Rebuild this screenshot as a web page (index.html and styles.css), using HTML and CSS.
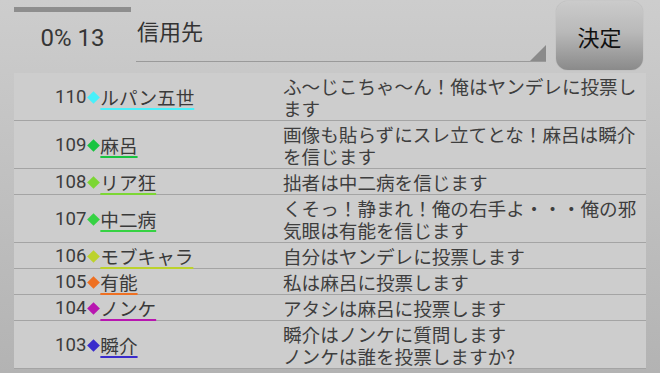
FILE: index.html
```html
<!DOCTYPE html>
<html lang="ja">
<head>
    <meta charset="UTF-8">
    <meta name="viewport" content="width=device-width, initial-scale=1.0">
    <title>投票</title>
    <link rel="stylesheet" href="styles.css">
</head>
<body>

    <!-- Top bar: progress, target spinner and confirm button -->
    <div class="header">
        <div class="status">
            <div class="progress"></div>
            <div class="count">0% 13</div>
        </div>
        <div class="spinner">
            <span class="spinner-text">信用先</span>
            <span class="spinner-arrow"></span>
        </div>
        <button type="button" class="decide">決定</button>
    </div>

    <!-- Message list -->
    <div class="list">
        <div class="row c-cyan">
            <div class="who"><span class="num">110</span><span class="mark"></span><span class="name">ルパン五世</span></div>
            <div class="msg">ふ〜じこちゃ〜ん！俺はヤンデレに投票します</div>
        </div>
        <div class="row c-green">
            <div class="who"><span class="num">109</span><span class="mark"></span><span class="name">麻呂</span></div>
            <div class="msg">画像も貼らずにスレ立てとな！麻呂は瞬介を信じます</div>
        </div>
        <div class="row c-lime">
            <div class="who"><span class="num">108</span><span class="mark"></span><span class="name">リア狂</span></div>
            <div class="msg">拙者は中二病を信じます</div>
        </div>
        <div class="row c-leaf">
            <div class="who"><span class="num">107</span><span class="mark"></span><span class="name">中二病</span></div>
            <div class="msg">くそっ！静まれ！俺の右手よ・・・俺の邪気眼は有能を信じます</div>
        </div>
        <div class="row c-olive">
            <div class="who"><span class="num">106</span><span class="mark"></span><span class="name">モブキャラ</span></div>
            <div class="msg">自分はヤンデレに投票します</div>
        </div>
        <div class="row c-orange">
            <div class="who"><span class="num">105</span><span class="mark"></span><span class="name">有能</span></div>
            <div class="msg">私は麻呂に投票します</div>
        </div>
        <div class="row c-purple">
            <div class="who"><span class="num">104</span><span class="mark"></span><span class="name">ノンケ</span></div>
            <div class="msg">アタシは麻呂に投票します</div>
        </div>
        <div class="row c-blue">
            <div class="who"><span class="num">103</span><span class="mark"></span><span class="name">瞬介</span></div>
            <div class="msg">瞬介はノンケに質問します<br>ノンケは誰を投票しますか?</div>
        </div>
    </div>

</body>
</html>
```

FILE: styles.css
```css
/* Basic page styling */
body {
    margin: 0;
    height: 373px;
    overflow: hidden;
    font-family: Roboto, "Noto Sans CJK JP", sans-serif;
    background: linear-gradient(#cdcdcd, #b3b3b3);
    color: #3c3c3c;
}

/* Header row */
.header {
    display: flex;
    height: 72px;
    padding-left: 14px;
}

.status {
    width: 117px;
    padding-top: 7px;
}

.progress {
    height: 5px;
    background-color: #8e8e8e;
}

.count {
    margin-top: 14px;
    font-size: 24px;
    line-height: 24px;
    text-align: center;
    color: #363636;
}

/* Spinner with its little corner triangle */
.spinner {
    display: flex;
    justify-content: space-between;
    width: 410px;
    height: 61px;
    margin-left: 5px;
    border-bottom: 1px solid #9a9a9a;
}

.spinner-text {
    padding: 22px 0 0 1px;
    font-size: 22px;
    line-height: 22px;
    color: #333;
}

.spinner-arrow {
    align-self: flex-end;
    width: 0;
    height: 0;
    border-left: 16px solid transparent;
    border-bottom: 16px solid #8a8a8a;
}

/* Confirm button */
.decide {
    width: 87px;
    height: 69px;
    margin: 1px 0 0 10px;
    padding: 0;
    border: none;
    border-radius: 12px;
    background: linear-gradient(#cbcbcb, #b9b9b9 45%, #8a8a8a);
    box-shadow: 0 0 1px rgba(0, 0, 0, 0.25);
    font-family: "Noto Sans CJK JP", sans-serif;
    font-size: 22px;
    color: #111;
}

/* List of messages */
.list {
    margin: 1px 14px 0;
    background-color: #cdcdcd;
}

.row {
    display: grid;
    grid-template-columns: 269px 1fr;
    align-items: center;
    padding: 2px 0 1px;
    border-bottom: 1px solid #a4a4a4;
    font-size: 18.6px;
    line-height: 22px;
}

.who {
    display: flex;
    align-items: center;
    padding-left: 41px;
}

/* Small diamond in the player's colour */
.mark {
    width: 9px;
    height: 9px;
    margin: 0 2px 0 3px;
    transform: rotate(45deg);
    background-color: var(--c);
}

.name {
    font-family: "Noto Sans CJK JP", sans-serif;
    color: #3a3a3a;
    text-decoration: underline;
    text-decoration-thickness: 2px;
    text-underline-offset: 3px;
    text-decoration-color: var(--c);
}

.msg {
    font-family: "Noto Sans CJK JP", sans-serif;
    color: #3e3e3e;
}

/* Player colours */
.c-cyan { --c: #48f0fa; }
.c-green { --c: #18c440; }
.c-lime { --c: #7cd634; }
.c-leaf { --c: #36d243; }
.c-olive { --c: #bcd22c; }
.c-orange { --c: #ee7022; }
.c-purple { --c: #b816b0; }
.c-blue { --c: #3a2ccc; }
```
